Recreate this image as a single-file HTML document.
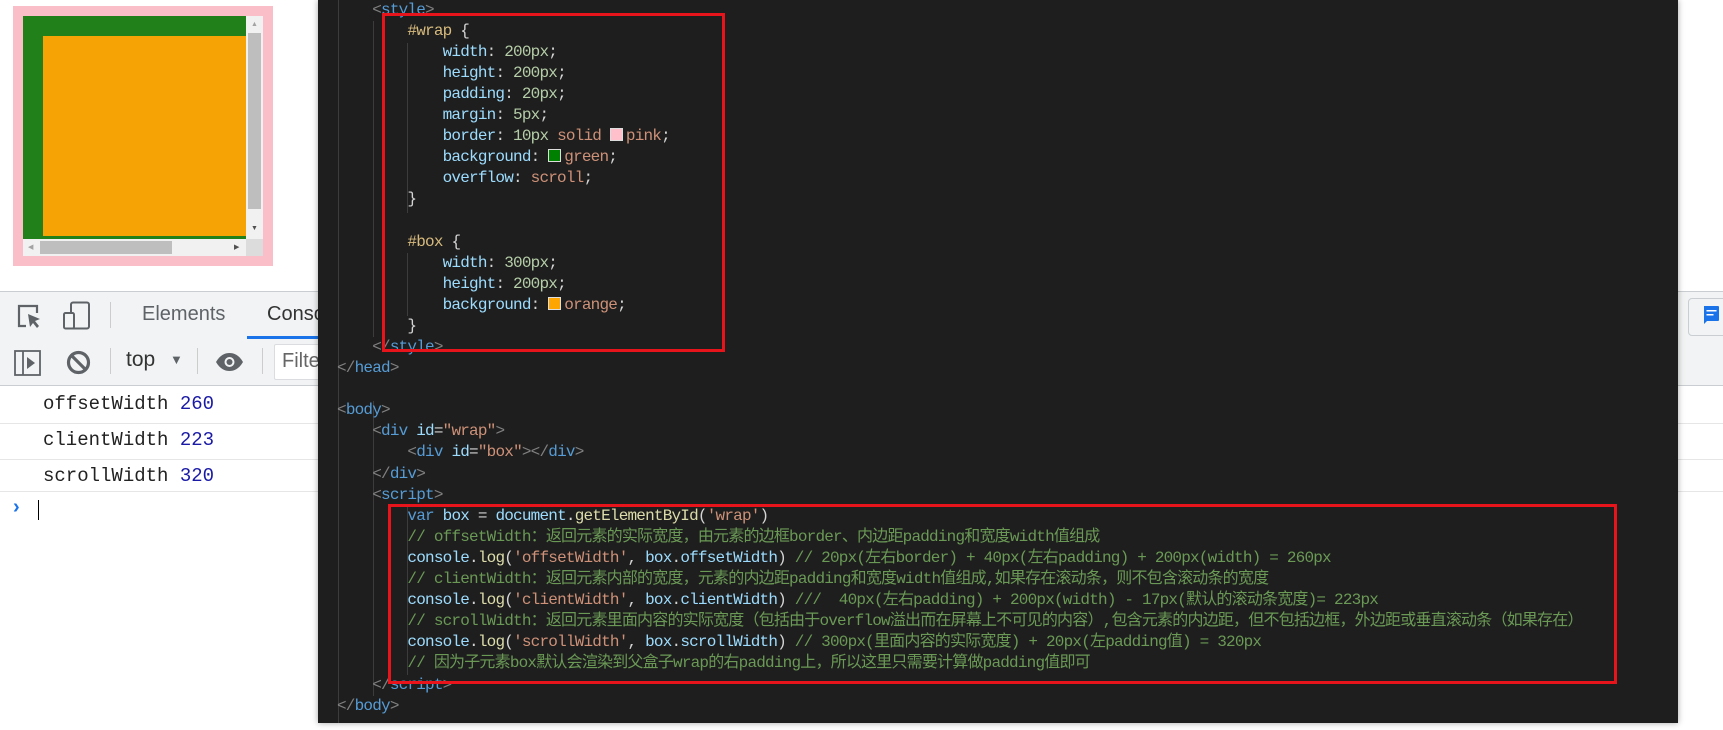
<!DOCTYPE html>
<html><head><meta charset="utf-8"><style>
body{margin:0;width:1723px;height:730px;background:#fff;position:relative;overflow:hidden;font-family:"Liberation Sans",sans-serif}
.abs{position:absolute}
#ed{position:absolute;left:318px;top:0;width:1360px;height:723px;background:#1e1e1e;box-shadow:0 0 6px rgba(0,0,0,.35)}
#code{position:absolute;left:19px;top:-0.5px;margin:0;font-family:"Liberation Mono","Noto Sans CJK SC",monospace;font-size:16px;letter-spacing:-0.8px;line-height:21.1px;color:#d4d4d4;white-space:pre}
.t{color:#808080}.n{color:#569cd6}.a{color:#9cdcfe}.s{color:#ce9178}.sel{color:#d7ba7d}.v{color:#b5cea8}.c{color:#6a9955}.f{color:#dcdcaa}.k{color:#569cd6}
.sw{display:inline-block;width:11px;height:11px;border:1px solid #ddd;margin-right:3px;vertical-align:-1px}
.g{position:absolute;width:1px;background:#3c3c3c}
.red{position:absolute;border:3.5px solid #e8141c}
.tb{position:absolute;left:0;width:1723px;background:#f1f3f4;border-bottom:1px solid #cacdd1}
.row{position:absolute;left:0;width:1723px;height:36px;border-bottom:1px solid #e6e6e6;font-family:"Liberation Mono",monospace;font-size:19px;color:#222}
.row span{position:absolute;left:43px;top:6px}
.row b{font-weight:normal;color:#1a1aa6}
.sep{position:absolute;width:1px;height:26px;background:#ccc}
</style></head><body>
<div class="abs" style="left:13px;top:6px;width:260px;height:260px;background:#f9bec8"></div>
<div class="abs" style="left:23px;top:16px;width:240px;height:240px;background:#21801a"></div>
<div class="abs" style="left:43px;top:36px;width:203px;height:200px;background:#f6a405"></div>
<div class="abs" style="left:246px;top:16px;width:17px;height:223px;background:#f1f1f1"></div>
<div class="abs" style="left:248px;top:33px;width:13px;height:176px;background:#bebebe"></div>
<div class="abs" style="left:23px;top:239px;width:223px;height:17px;background:#f1f1f1"></div>
<div class="abs" style="left:40px;top:241px;width:132px;height:13px;background:#bebebe"></div>
<div class="abs" style="left:246px;top:239px;width:17px;height:17px;background:#dcdcdc"></div>
<div class="abs" style="left:251px;top:21px;font-size:7px;color:#a3a3a3">▲</div>
<div class="abs" style="left:251px;top:225px;font-size:7px;color:#505050">▼</div>
<div class="abs" style="left:28px;top:243px;font-size:7px;color:#a3a3a3">◀</div>
<div class="abs" style="left:234px;top:243px;font-size:7px;color:#505050">▶</div>

<div class="tb" style="top:291px;height:47px;border-top:1px solid #cacdd1"></div>
<div class="tb" style="top:339px;height:46px;"></div>
<svg class="abs" style="left:17px;top:304px" width="26" height="26" viewBox="0 0 26 26"><path d="M9 22H2V2h18v7" fill="none" stroke="#5f6368" stroke-width="2.2"/><path d="M11 10l12 5-5 2 4 5-2 2-4-5-3 4z" fill="#5f6368"/></svg>
<svg class="abs" style="left:62px;top:301px" width="30" height="30" viewBox="0 0 30 30"><rect x="9" y="1.5" width="18" height="26" rx="2" fill="none" stroke="#5f6368" stroke-width="2"/><rect x="2" y="12" width="10" height="15.5" rx="1.5" fill="#f1f3f4" stroke="#5f6368" stroke-width="2"/></svg>
<div class="sep" style="left:110px;top:302px"></div>
<div class="abs" style="left:142px;top:303px;font-size:20px;color:#5f6368">Elements</div>
<div class="abs" style="left:267px;top:303px;font-size:20px;color:#333">Console</div>
<div class="abs" style="left:247px;top:336px;width:80px;height:3px;background:#1a73e8"></div>
<svg class="abs" style="left:14px;top:350px" width="28" height="26" viewBox="0 0 28 26"><rect x="1" y="1" width="25" height="24" fill="none" stroke="#5f6368" stroke-width="1.8"/><line x1="9" y1="1" x2="9" y2="25" stroke="#5f6368" stroke-width="1.8"/><path d="M13 7l8 6-8 6z" fill="#5f6368"/></svg>
<svg class="abs" style="left:66px;top:350px" width="25" height="25" viewBox="0 0 25 25"><circle cx="12.5" cy="12.5" r="10" fill="none" stroke="#5f6368" stroke-width="3.2"/><line x1="5.5" y1="5.5" x2="19.5" y2="19.5" stroke="#5f6368" stroke-width="3.2"/></svg>
<div class="sep" style="left:110px;top:348px"></div>
<div class="abs" style="left:126px;top:348px;font-size:21px;color:#333">top</div>
<div class="abs" style="left:170px;top:352px;font-size:13px;color:#5f6368">▼</div>
<div class="sep" style="left:197px;top:348px"></div>
<svg class="abs" style="left:215px;top:352px" width="29" height="20" viewBox="0 0 29 20"><path d="M1 10C5 3 10 1 14.5 1S24 3 28 10C24 17 19 19 14.5 19S5 17 1 10z" fill="#5f6368"/><circle cx="14.5" cy="10" r="5" fill="#f1f3f4"/><circle cx="14.5" cy="10" r="3" fill="#5f6368"/></svg>
<div class="sep" style="left:262px;top:348px"></div>
<div class="abs" style="left:274px;top:344px;width:60px;height:34px;background:#fff;border:1px solid #dadce0;border-radius:2px"></div>
<div class="abs" style="left:282px;top:350px;font-size:20px;color:#666">Filter</div>
<div class="row" style="top:387px"><span>offsetWidth <b>260</b></span></div>
<div class="row" style="top:423px"><span>clientWidth <b>223</b></span></div>
<div class="row" style="top:459px;height:32px"><span>scrollWidth <b>320</b></span></div>
<div class="abs" style="left:13px;top:496px;font-size:20px;color:#1a73e8;font-weight:bold">›</div>
<div class="abs" style="left:38px;top:500px;width:1px;height:20px;background:#000"></div>
<div class="abs" style="left:1688px;top:298px;width:40px;height:36px;border:1px solid #cacdd1;border-radius:4px;background:#f1f3f4"></div>
<svg class="abs" style="left:1702px;top:305px" width="18" height="20" viewBox="0 0 18 20"><path d="M2 1h14a1 1 0 0 1 1 1v13a1 1 0 0 1-1 1H5l-3 3z" fill="#1a73e8"/><rect x="4.5" y="5" width="10" height="1.5" fill="#fff"/><rect x="4.5" y="9" width="7" height="1.5" fill="#fff"/></svg>

<div id="ed">
<div class="g" style="left:20px;top:0;height:723px"></div>
<div class="g" style="left:55px;top:21px;height:316px"></div>
<div class="g" style="left:55px;top:401px;height:295px"></div>
<div class="g" style="left:89px;top:43px;height:170px"></div>
<div class="g" style="left:89px;top:253px;height:63px"></div>
<div class="g" style="left:89px;top:506px;height:169px"></div>
<pre id="code"><span class="t">    &lt;</span><span class="n">style</span><span class="t">&gt;</span>
        <span class="sel">#wrap</span> {
            <span class="a">width</span>: <span class="v">200px</span>;
            <span class="a">height</span>: <span class="v">200px</span>;
            <span class="a">padding</span>: <span class="v">20px</span>;
            <span class="a">margin</span>: <span class="v">5px</span>;
            <span class="a">border</span>: <span class="v">10px</span> <span class="s">solid</span> <span class="sw" style="background:pink"></span><span class="s">pink</span>;
            <span class="a">background</span>: <span class="sw" style="background:green"></span><span class="s">green</span>;
            <span class="a">overflow</span>: <span class="s">scroll</span>;
        }

        <span class="sel">#box</span> {
            <span class="a">width</span>: <span class="v">300px</span>;
            <span class="a">height</span>: <span class="v">200px</span>;
            <span class="a">background</span>: <span class="sw" style="background:orange"></span><span class="s">orange</span>;
        }
<span class="t">    &lt;/</span><span class="n">style</span><span class="t">&gt;</span>
<span class="t">&lt;/</span><span class="n">head</span><span class="t">&gt;</span>

<span class="t">&lt;</span><span class="n">body</span><span class="t">&gt;</span>
<span class="t">    &lt;</span><span class="n">div</span> <span class="a">id</span>=<span class="s">"wrap"</span><span class="t">&gt;</span>
<span class="t">        &lt;</span><span class="n">div</span> <span class="a">id</span>=<span class="s">"box"</span><span class="t">&gt;&lt;/</span><span class="n">div</span><span class="t">&gt;</span>
<span class="t">    &lt;/</span><span class="n">div</span><span class="t">&gt;</span>
<span class="t">    &lt;</span><span class="n">script</span><span class="t">&gt;</span>
        <span class="k">var</span> <span class="a">box</span> = <span class="a">document</span>.<span class="f">getElementById</span>(<span class="s">'wrap'</span>)
        <span class="c">// offsetWidth：返回元素的实际宽度，由元素的边框border、内边距padding和宽度width值组成</span>
        <span class="a">console</span>.<span class="f">log</span>(<span class="s">'offsetWidth'</span>, <span class="a">box</span>.<span class="a">offsetWidth</span>) <span class="c">// 20px(左右border) + 40px(左右padding) + 200px(width) = 260px</span>
        <span class="c">// clientWidth：返回元素内部的宽度，元素的内边距padding和宽度width值组成,如果存在滚动条，则不包含滚动条的宽度</span>
        <span class="a">console</span>.<span class="f">log</span>(<span class="s">'clientWidth'</span>, <span class="a">box</span>.<span class="a">clientWidth</span>) <span class="c">///  40px(左右padding) + 200px(width) - 17px(默认的滚动条宽度)= 223px</span>
        <span class="c">// scrollWidth：返回元素里面内容的实际宽度（包括由于overflow溢出而在屏幕上不可见的内容）,包含元素的内边距，但不包括边框，外边距或垂直滚动条（如果存在）</span>
        <span class="a">console</span>.<span class="f">log</span>(<span class="s">'scrollWidth'</span>, <span class="a">box</span>.<span class="a">scrollWidth</span>) <span class="c">// 300px(里面内容的实际宽度) + 20px(左padding值) = 320px</span>
        <span class="c">// 因为子元素box默认会渲染到父盒子wrap的右padding上，所以这里只需要计算做padding值即可</span>
<span class="t">    &lt;/</span><span class="n">script</span><span class="t">&gt;</span>
<span class="t">&lt;/</span><span class="n">body</span><span class="t">&gt;</span></pre>
</div>
<div class="red" style="left:382px;top:13px;width:337px;height:333px"></div>
<div class="red" style="left:388px;top:504px;width:1223px;height:174px"></div>
</body></html>
